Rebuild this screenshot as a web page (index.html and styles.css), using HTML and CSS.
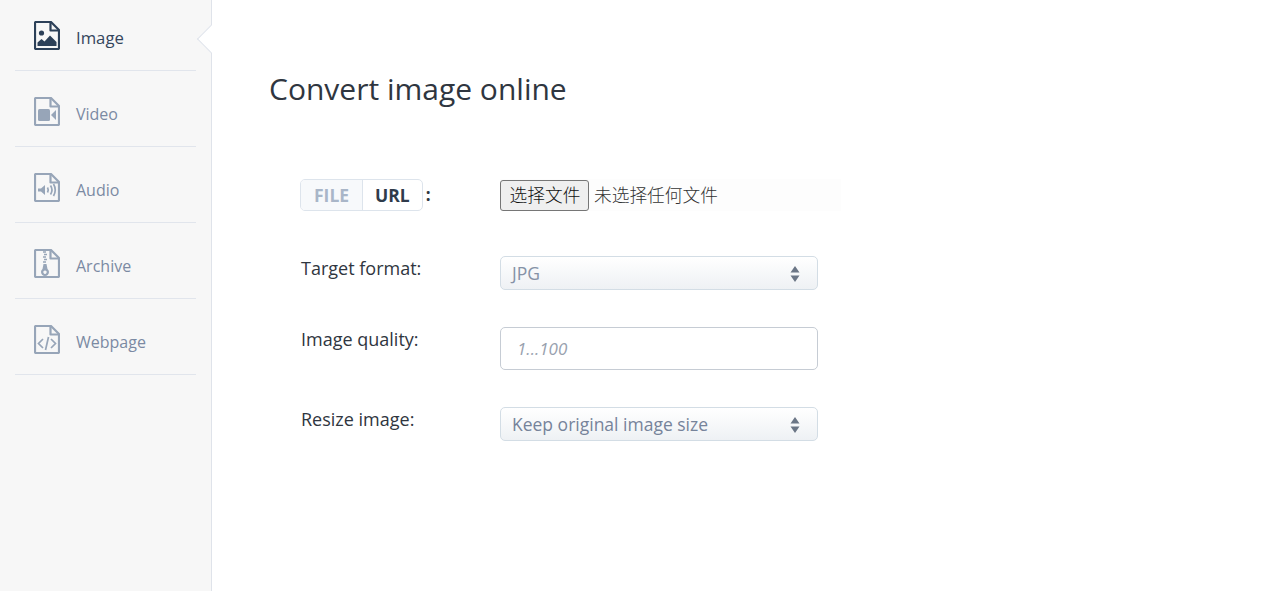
FILE: index.html
```html
<!DOCTYPE html>
<html lang="en">
<head>
<meta charset="utf-8">
<title>Convert image online</title>
<link rel="stylesheet" href="styles.css">
</head>
<body>
<div class="app">
  <aside class="sidebar">
    <nav class="nav">
      <a class="nav-item nav-item-first active">
        <svg class="nav-icon" viewBox="0 0 26 29"><path class="doc" d="M2 1h15l8 8v18a1 1 0 0 1-1 1H2a1 1 0 0 1-1-1V2a1 1 0 0 1 1-1z"/><path class="doc" d="M16.500 1.500v8h8"/><circle class="fill" cx="7.500" cy="12" r="2.600"/><path class="fill" d="M3.500 25v-3.500l4-3.500 3 2.500 5.500-6 6.500 6.500V25z"/></svg>
        <span>Image</span>
        <i class="nav-pointer"></i>
      </a>
      <a class="nav-item">
        <svg class="nav-icon" viewBox="0 0 26 29"><path class="doc" d="M2 1h15l8 8v18a1 1 0 0 1-1 1H2a1 1 0 0 1-1-1V2a1 1 0 0 1 1-1z"/><path class="doc" d="M16.500 1.500v8h8"/><rect class="fill" x="4" y="12" width="12" height="12" rx="1.500"/><path class="fill" d="M17 18l5-5v10z"/></svg>
        <span>Video</span>
      </a>
      <a class="nav-item">
        <svg class="nav-icon" viewBox="0 0 26 29"><path class="doc" d="M2 1h15l8 8v18a1 1 0 0 1-1 1H2a1 1 0 0 1-1-1V2a1 1 0 0 1 1-1z"/><path class="doc" d="M16.500 1.500v8h8"/><path class="fill" d="M4 15.500h3l4-3.500v10l-4-3.500H4z"/><path class="thin" d="M13.500 14.500q1.500 2.500 0 5M16.500 12.500q3 4.500 0 9M19.500 11q3.500 6 0 12"/></svg>
        <span>Audio</span>
      </a>
      <a class="nav-item">
        <svg class="nav-icon" viewBox="0 0 26 29"><path class="doc" d="M2 1h15l8 8v18a1 1 0 0 1-1 1H2a1 1 0 0 1-1-1V2a1 1 0 0 1 1-1z"/><path class="doc" d="M16.500 1.500v8h8"/><path class="thin" d="M9 3h3M10 5.500h3M9 8h3M10 10.500h3M9 13h3"/><path class="fill" fill-rule="evenodd" d="M9.500 15h3l1 5a4 4 0 1 1-5 0zM11 21.500a1.700 1.700 0 1 0 .01 0z"/></svg>
        <span>Archive</span>
      </a>
      <a class="nav-item">
        <svg class="nav-icon" viewBox="0 0 26 29"><path class="doc" d="M2 1h15l8 8v18a1 1 0 0 1-1 1H2a1 1 0 0 1-1-1V2a1 1 0 0 1 1-1z"/><path class="doc" d="M16.500 1.500v8h8"/><path class="thin" d="M9 14l-4.500 4.500L9 23M17 14l4.500 4.500L17 23M14.500 12l-3 13"/></svg>
        <span>Webpage</span>
      </a>
    </nav>
  </aside>
  <main class="main">
    <h1 class="title">Convert image online</h1>
    <form class="form">
      <div class="row row-source">
        <div class="label label-source">
          <span class="toggle"><b class="toggle-off">FILE</b><b class="toggle-on">URL</b></span><b class="colon">:</b>
        </div>
        <div class="file-field">
          <button type="button" class="file-button">选择文件</button>
          <span class="file-name">未选择任何文件</span>
        </div>
      </div>
      <div class="row row-format">
        <label class="label">Target format:</label>
        <div class="select select-muted">JPG<svg class="updown" viewBox="0 0 10 16"><path d="M5 0l4.500 6.500h-9zM5 16L.5 9.500h9z"/></svg></div>
      </div>
      <div class="row row-quality">
        <label class="label">Image quality:</label>
        <div class="text-input">1...100</div>
      </div>
      <div class="row">
        <label class="label">Resize image:</label>
        <div class="select">Keep original image size<svg class="updown" viewBox="0 0 10 16"><path d="M5 0l4.500 6.500h-9zM5 16L.5 9.500h9z"/></svg></div>
      </div>
    </form>
  </main>
</div>
</body>
</html>
```

FILE: styles.css
```css
* { box-sizing: border-box; }
html, body { margin: 0; height: 100%; overflow: hidden; background: #fff; }
body { font-family: "Open Sans", sans-serif; color: #2f3640; }
.app { display: flex; height: 591px; }

.sidebar { width: 212px; flex: none; background: #f7f7f7; border-right: 1px solid #dfe3ea; padding: 0 15px; }
.nav { display: flex; flex-direction: column; width: 181px; }
.nav-item { position: relative; display: flex; align-items: center; gap: 16px; height: 76px; padding: 10px 0 0 19px; border-bottom: 1px solid #e1e5ec; color: #7b8aa3; font-size: 16px; }
.nav-item-first { height: 71px; padding-top: 5px; }
.nav-item.active { color: #34465d; font-size: 16.700px; font-weight: 500; }
.nav-icon { width: 26px; height: 29px; flex: none; margin-bottom: 4px; color: #97a5b8; }
.active .nav-icon { color: #2c4058; }
.doc { fill: none; stroke: currentColor; stroke-width: 2.200; stroke-linejoin: round; }
.fill { fill: currentColor; }
.thin { fill: none; stroke: currentColor; stroke-width: 1.700; }
.nav-pointer { position: absolute; left: 186px; top: 29px; width: 20px; height: 20px; background: #fff; border-left: 1px solid #dfe3ea; border-bottom: 1px solid #dfe3ea; transform: rotate(45deg); }

.main { flex: 1; padding: 69px 0 0 57px; }
.title { margin: 0; font-size: 30px; line-height: 40px; font-weight: 400; color: #2f3640; }
.form { display: flex; flex-direction: column; padding: 71px 0 0 31px; }
.row { display: flex; align-items: flex-start; }
.row-source { height: 76px; }
.row-format { height: 71px; }
.row-quality { height: 80px; }
.label { width: 200px; flex: none; padding-left: 1px; font-size: 18px; font-weight: 500; line-height: 24px; color: #2f3640; }
.label-source { display: flex; align-items: center; height: 32px; margin-top: -1px; padding-left: 0; }
.toggle { display: inline-flex; height: 32px; border: 1px solid #dde4ec; border-radius: 5px; font-size: 17.500px; line-height: 30px; }
.toggle b { font-weight: 700; padding: 0 12px; }
.toggle-off { color: #a9b6c8; background: #f7f9fb; border-right: 1px solid #dde4ec; border-radius: 4px 0 0 4px; padding: 0 13px !important; }
.toggle-on { color: #2f3b4b; }
.colon { margin-left: 3px; font-size: 17px; font-weight: 700; }

.file-field { display: flex; align-items: center; gap: 5px; width: 341px; height: 32px; margin-top: -1px; background: #fdfdfd; font-family: "Noto Sans CJK SC", sans-serif; font-size: 17.700px; color: #333; font-weight: 300; }
.file-button { width: 89px; height: 31px; padding: 0 0 0 1px; border: 1px solid #767676; border-radius: 3px; background: #efefef; color: #111; font: inherit; line-height: 1; }
.file-name { line-height: 1; }

.select { position: relative; display: flex; align-items: center; width: 318px; height: 34px; padding: 0 11px 1px; border: 1px solid #d3dde5; border-radius: 5px; background: linear-gradient(#fff, #eef1f4); font-size: 17.500px; color: #76839a; }
.select-muted { color: #8592a6; }
.updown { position: absolute; right: 17px; top: 9px; width: 10px; height: 16px; fill: #6b7686; }
.text-input { display: flex; align-items: center; width: 318px; height: 43px; padding: 0 16px; border: 1px solid #c6ccd4; border-radius: 5px; background: #fff; font-size: 17px; font-style: italic; color: #98a1ae; }
```
